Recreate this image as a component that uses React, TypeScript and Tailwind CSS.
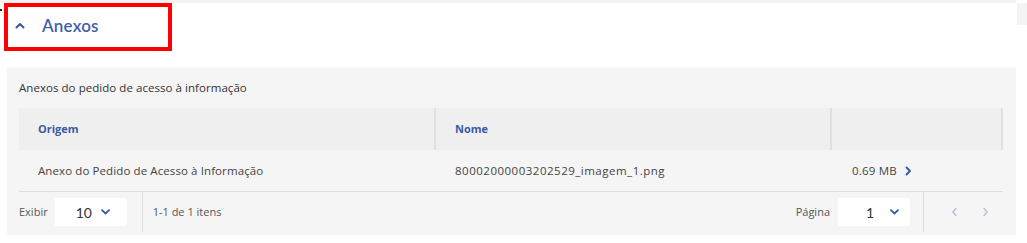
import React from "react";

const font = { fontFamily: "'Open Sans', 'Liberation Sans', sans-serif" };
const headFont = { fontFamily: "Lato, 'Open Sans', 'Liberation Sans', sans-serif" };

function ChevronDown() {
  return (
    <svg width="9" height="6" viewBox="0 0 9 6" fill="none">
      <path d="M1 1.2 L4.5 4.5 L8 1.2" stroke="#3a5aa8" strokeWidth="1.8" strokeLinecap="round" strokeLinejoin="round" />
    </svg>
  );
}

export default function App() {
  return (
    <div className="w-[1027px] h-[243px] bg-white relative overflow-hidden text-[#333]" style={font}>
      <div className="h-[3px] bg-[#f2f2f2] w-[1016px]" />
      <div className="absolute left-0 top-[9px] w-[2px] h-[2px] bg-[#222]" />
      <div className="absolute right-0 top-[3px] w-[10px] h-[22px] bg-[#f3f3f3]" />
      <div className="flex">
        <div className="ml-[4px] w-[168px] h-[48px] border-4 border-[#ff0000] flex items-center pl-[7px]">
          <svg width="10" height="7" viewBox="0 0 10 7" fill="none" className="mt-[-3px]">
            <path d="M1.5 5.5 L5 2 L8.5 5.5" stroke="#3a5aa8" strokeWidth="2" strokeLinecap="round" strokeLinejoin="round" />
          </svg>
          <span className="ml-[17px] text-[17px] font-semibold text-[#3f5fae] tracking-[0.2px] mt-[-3px]" style={headFont}>Anexos</span>
        </div>
      </div>
      <div className="ml-[7px] mt-[16px] w-[1009px] h-[168px] bg-[#f5f5f5] px-[12px]">
        <div className="h-[41px] pt-[13px] text-[11.5px] tracking-[0.05px] text-[#333] leading-[15px]">
          Anexos do pedido de acesso à informação
        </div>
        <div className="w-[984px]">
          <div className="flex h-[42px] bg-[#efefef] text-[11px] font-bold text-[#3a5aa8]">
            <div className="w-[417px] border-r-2 border-[#e0e0e0] flex items-center pl-[19px]">Origem</div>
            <div className="w-[396px] border-r-2 border-[#e0e0e0] flex items-center pl-[19px]">Nome</div>
            <div className="w-[171px] border-r-2 border-[#e0e0e0]" />
          </div>
          <div className="flex h-[42px] text-[11.5px] text-[#444] border-b border-[#dedede]">
            <div className="w-[417px] flex items-center pl-[19px] tracking-[0.1px]">Anexo do Pedido de Acesso à Informação</div>
            <div className="w-[396px] flex items-center pl-[19px] tracking-[0.5px]">80002000003202529_imagem_1.png</div>
            <div className="w-[171px] flex items-center pl-[20px]">
              <span className="tracking-[0.2px]">0.69 MB</span>
              <svg width="7" height="10" viewBox="0 0 7 10" fill="none" className="ml-[8px]">
                <path d="M1.5 1.5 L5 5 L1.5 8.5" stroke="#3a5aa8" strokeWidth="2" strokeLinecap="round" strokeLinejoin="round" />
              </svg>
            </div>
          </div>
          <div className="flex h-[40px] text-[11px] text-[#555]">
            <div className="flex items-center">
              <span>Exibir</span>
              <div className="ml-[7px] w-[72px] h-[28px] bg-white flex items-center pl-[21px]">
                <span className="text-[14px] text-[#333] w-[25px]" style={headFont}>10</span>
                <ChevronDown />
              </div>
            </div>
            <div className="ml-[15px] w-px bg-[#dcdcdc]" />
            <div className="ml-[10px] flex items-center">1-1 de 1 itens</div>
            <div className="flex-1" />
            <div className="flex items-center">
              <span>Página</span>
              <div className="ml-[8px] w-[72px] h-[28px] bg-white flex items-center pl-[28px]">
                <span className="text-[14px] text-[#333] w-[24px]" style={headFont}>1</span>
                <ChevronDown />
              </div>
            </div>
            <div className="ml-[13px] w-px bg-[#dcdcdc]" />
            <div className="flex items-center ml-[27px] gap-[24px] mr-[14px]">
              <svg width="7" height="10" viewBox="0 0 7 10" fill="none">
                <path d="M5 1.5 L1.8 5 L5 8.5" stroke="#b5bfd6" strokeWidth="1.4" strokeLinecap="round" strokeLinejoin="round" />
              </svg>
              <svg width="7" height="10" viewBox="0 0 7 10" fill="none">
                <path d="M2 1.5 L5.2 5 L2 8.5" stroke="#b5bfd6" strokeWidth="1.4" strokeLinecap="round" strokeLinejoin="round" />
              </svg>
            </div>
          </div>
        </div>
      </div>
    </div>
  );
}
